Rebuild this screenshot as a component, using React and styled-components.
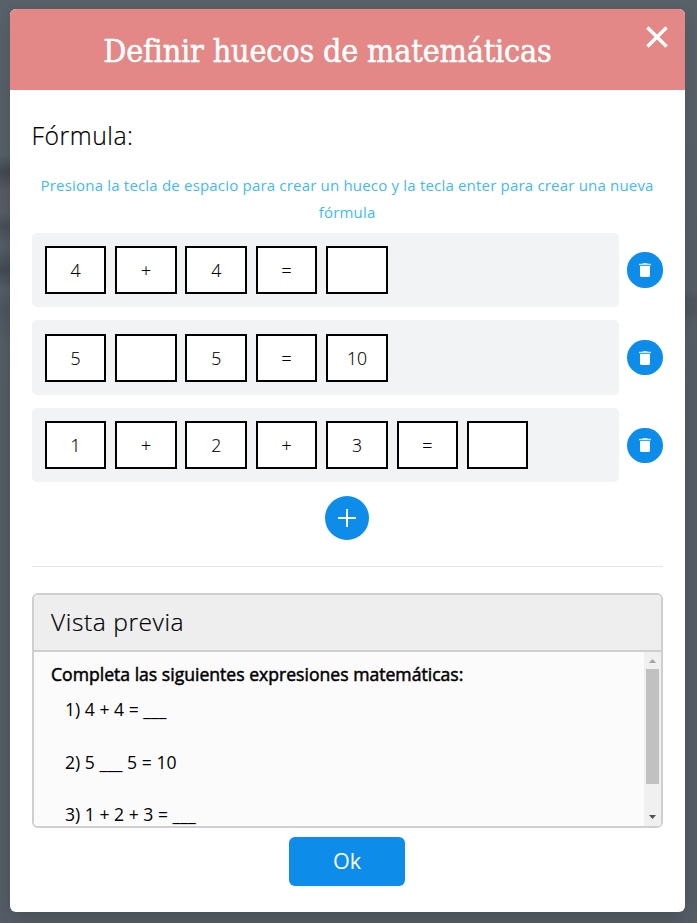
import React from 'react';
import styled, { createGlobalStyle } from 'styled-components';

const Global = createGlobalStyle`
  *, *::before, *::after { box-sizing: border-box; }
  html, body { margin: 0; padding: 0; }
  body { font-family: "Open Sans", "Noto Sans", sans-serif; color: #000; overflow: hidden; }
  button { font-family: inherit; border: 0; padding: 0; cursor: pointer; }
`;

const Backdrop = styled.div`
  width: 100vw;
  height: 100vh;
  padding: 9px 12px 11px 10px;
  background:
    linear-gradient(to bottom, transparent 155px, #434952 172px, #595b63 190px, #585e67 212px, #49505a 226px, #565f68 246px, #444b55 270px, #555e67 290px, #4e5660 310px, transparent 345px) 0 0 / 12px 100% no-repeat,
    linear-gradient(to bottom, transparent 290px, #505760 300px, #505760 312px, transparent 326px) 100% 0 / 14px 100% no-repeat,
    linear-gradient(to bottom, #59626a 0, #555d66 400px, #555d66 100%);
`;

const Dialog = styled.section`
  display: flex;
  flex-direction: column;
  height: 903px;
  background: #fff;
  border-radius: 6px;
  overflow: hidden;
  box-shadow: 0 6px 20px rgba(0, 0, 0, 0.16);
`;

const Header = styled.header`
  position: relative;
  flex: none;
  height: 81px;
  padding: 2px 40px 0 0;
  display: flex;
  align-items: center;
  justify-content: center;
  background: #e38886;
`;

const Title = styled.h1`
  margin: 0;
  font: 400 32px/44px "Roboto Slab", "DejaVu Serif Condensed", "DejaVu Serif", serif;
  font-stretch: condensed;
  letter-spacing: -0.16px;
  -webkit-text-stroke: 0.5px #fff;
  color: #fff;
  white-space: nowrap;
`;

const Close = styled.button`
  position: absolute;
  top: 17px;
  right: 17.4px;
  width: 22px;
  height: 22px;
  background: none;
  svg { display: block; }
`;

const Body = styled.div`
  flex: 1;
  display: flex;
  flex-direction: column;
  padding: 27px 22.4px 0 21.6px;
`;

const Label = styled.h2`
  margin: 0;
  font-size: 24.8px;
  letter-spacing: 0.5px;
  line-height: 36px;
  font-weight: 300;
  -webkit-text-stroke: 0.2px #000;
  color: #000;
`;

const Hint = styled.p`
  margin: 19px 0 0;
  padding-bottom: 6.8px;
  font-size: 15px;
  letter-spacing: 0.19px;
  line-height: 27px;
  text-align: center;
  color: #3dbbf5;
`;

const Formulas = styled.div`
  display: grid;
  gap: 13.2px;
`;

const FormulaRow = styled.div`
  display: flex;
  align-items: center;
  gap: 8.8px;
`;

const Track = styled.div`
  flex: 1;
  display: flex;
  gap: 8.72px;
  height: 74.4px;
  padding: 13.2px;
  background: #f2f3f5;
  border-radius: 5px;
`;

const Cell = styled.div`
  width: 61.64px;
  height: 48px;
  display: flex;
  align-items: center;
  justify-content: center;
  border: 2px solid #000;
  background: #fff;
  font-size: 17.6px;
  font-weight: 300;
  -webkit-text-stroke: 0.15px #000;
`;

const RoundButton = styled.button`
  flex: none;
  display: flex;
  align-items: center;
  justify-content: center;
  width: ${(p) => p.$size}px;
  height: ${(p) => p.$size}px;
  border-radius: 50%;
  background: #0d8cea;
`;

const AddBar = styled.div`
  display: flex;
  justify-content: center;
  padding: 13.2px 0 26px;
  border-bottom: 1px solid #e4e5e7;
`;

const Preview = styled.section`
  margin-top: 26px;
  height: 235px;
  display: flex;
  flex-direction: column;
  border: 2px solid #cfcfcf;
  border-radius: 6px;
  overflow: hidden;
`;

const PreviewTitle = styled.h2`
  flex: none;
  margin: 0;
  height: 57px;
  padding-left: 17.5px;
  border-bottom: 2px solid #cfcfcf;
  background: #eee;
  font-size: 24.6px;
  letter-spacing: 0.55px;
  font-weight: 300;
  line-height: 54px;
  -webkit-text-stroke: 0.2px #000;
`;

const PreviewBody = styled.div`
  flex: 1;
  min-height: 0;
  display: flex;
  background: #fbfbfb;
`;

const PreviewText = styled.div`
  flex: 1;
  padding: 9px 17px 0 17.4px;
  overflow: hidden;
`;

const Statement = styled.p`
  margin: 0;
  font-size: 17.6px;
  line-height: 27px;
  -webkit-text-stroke: 0.5px #000;
  white-space: nowrap;
`;

const Expressions = styled.div`
  display: flex;
  flex-direction: column;
  gap: 25.5px;
  padding: 8.6px 0 0 14px;
`;

const Expression = styled.p`
  margin: 0;
  font-size: 17.6px;
  line-height: 27px;
  white-space: nowrap;
`;

const Scrollbar = styled.div`
  width: 17px;
  display: flex;
  flex-direction: column;
  align-items: center;
  background: #f0f0f0;
`;

const Thumb = styled.div`
  width: 13px;
  height: 115px;
  margin-bottom: auto;
  background: #c1c1c1;
`;

const Arrow = styled.svg`
  display: block;
  width: 17px;
  height: 17px;
  fill: ${(p) => (p.$muted ? '#a3a3a3' : '#505050')};
`;

const OkButton = styled.button`
  align-self: center;
  margin-top: 9px;
  width: 116px;
  height: 49px;
  border-radius: 6px;
  background: #0d8cea;
  color: #fff;
  font-size: 21.6px;
  line-height: 48px;
  padding-bottom: 1px;
`;

const formulas = [
  ['4', '+', '4', '=', ''],
  ['5', '', '5', '=', '10'],
  ['1', '+', '2', '+', '3', '=', ''],
];

const TrashIcon = () => (
  <svg width="12" height="14" viewBox="0 0 12 14" fill="#fff">
    <path d="M4 0h4l.7.8H12v1.5H0V.8h3.3z" fillOpacity=".8" />
    <path d="M1 3h10v9.5c0 .9-.6 1.5-1.5 1.5h-7C1.6 14 1 13.4 1 12.5z" />
  </svg>
);

export default function App() {
  return (
    <>
      <Global />
      <Backdrop>
        <Dialog>
          <Header>
            <Title>Definir huecos de matemáticas</Title>
            <Close aria-label="Cerrar">
              <svg width="22" height="22" viewBox="0 0 22 22" stroke="#fff" strokeWidth="3.5">
                <path d="M1.4 1.4 20.6 20.6M20.6 1.4 1.4 20.6" />
              </svg>
            </Close>
          </Header>
          <Body>
            <Label>Fórmula:</Label>
            <Hint>Presiona la tecla de espacio para crear un hueco y la tecla enter para crear una nueva fórmula</Hint>
            <Formulas>
              {formulas.map((cells, i) => (
                <FormulaRow key={i}>
                  <Track>
                    {cells.map((value, j) => <Cell key={j}>{value}</Cell>)}
                  </Track>
                  <RoundButton $size={35.2} aria-label="Eliminar"><TrashIcon /></RoundButton>
                </FormulaRow>
              ))}
            </Formulas>
            <AddBar>
              <RoundButton $size={44} aria-label="Añadir">
                <svg width="18" height="18" viewBox="0 0 18 18" stroke="#fff" strokeWidth="2">
                  <path d="M9 0v18M0 9h18" />
                </svg>
              </RoundButton>
            </AddBar>
            <Preview>
              <PreviewTitle>Vista previa</PreviewTitle>
              <PreviewBody>
                <PreviewText>
                  <Statement>Completa las siguientes expresiones matemáticas:</Statement>
                  <Expressions>
                    {formulas.map((cells, i) => (
                      <Expression key={i}>{`${i + 1}) ${cells.map((c) => c || '___').join(' ')}`}</Expression>
                    ))}
                  </Expressions>
                </PreviewText>
                <Scrollbar>
                  <Arrow $muted viewBox="0 0 17 17"><path d="M5 11h7L8.5 7z" /></Arrow>
                  <Thumb />
                  <Arrow viewBox="0 0 17 17"><path d="M5 6h7L8.5 10z" /></Arrow>
                </Scrollbar>
              </PreviewBody>
            </Preview>
            <OkButton>Ok</OkButton>
          </Body>
        </Dialog>
      </Backdrop>
    </>
  );
}
